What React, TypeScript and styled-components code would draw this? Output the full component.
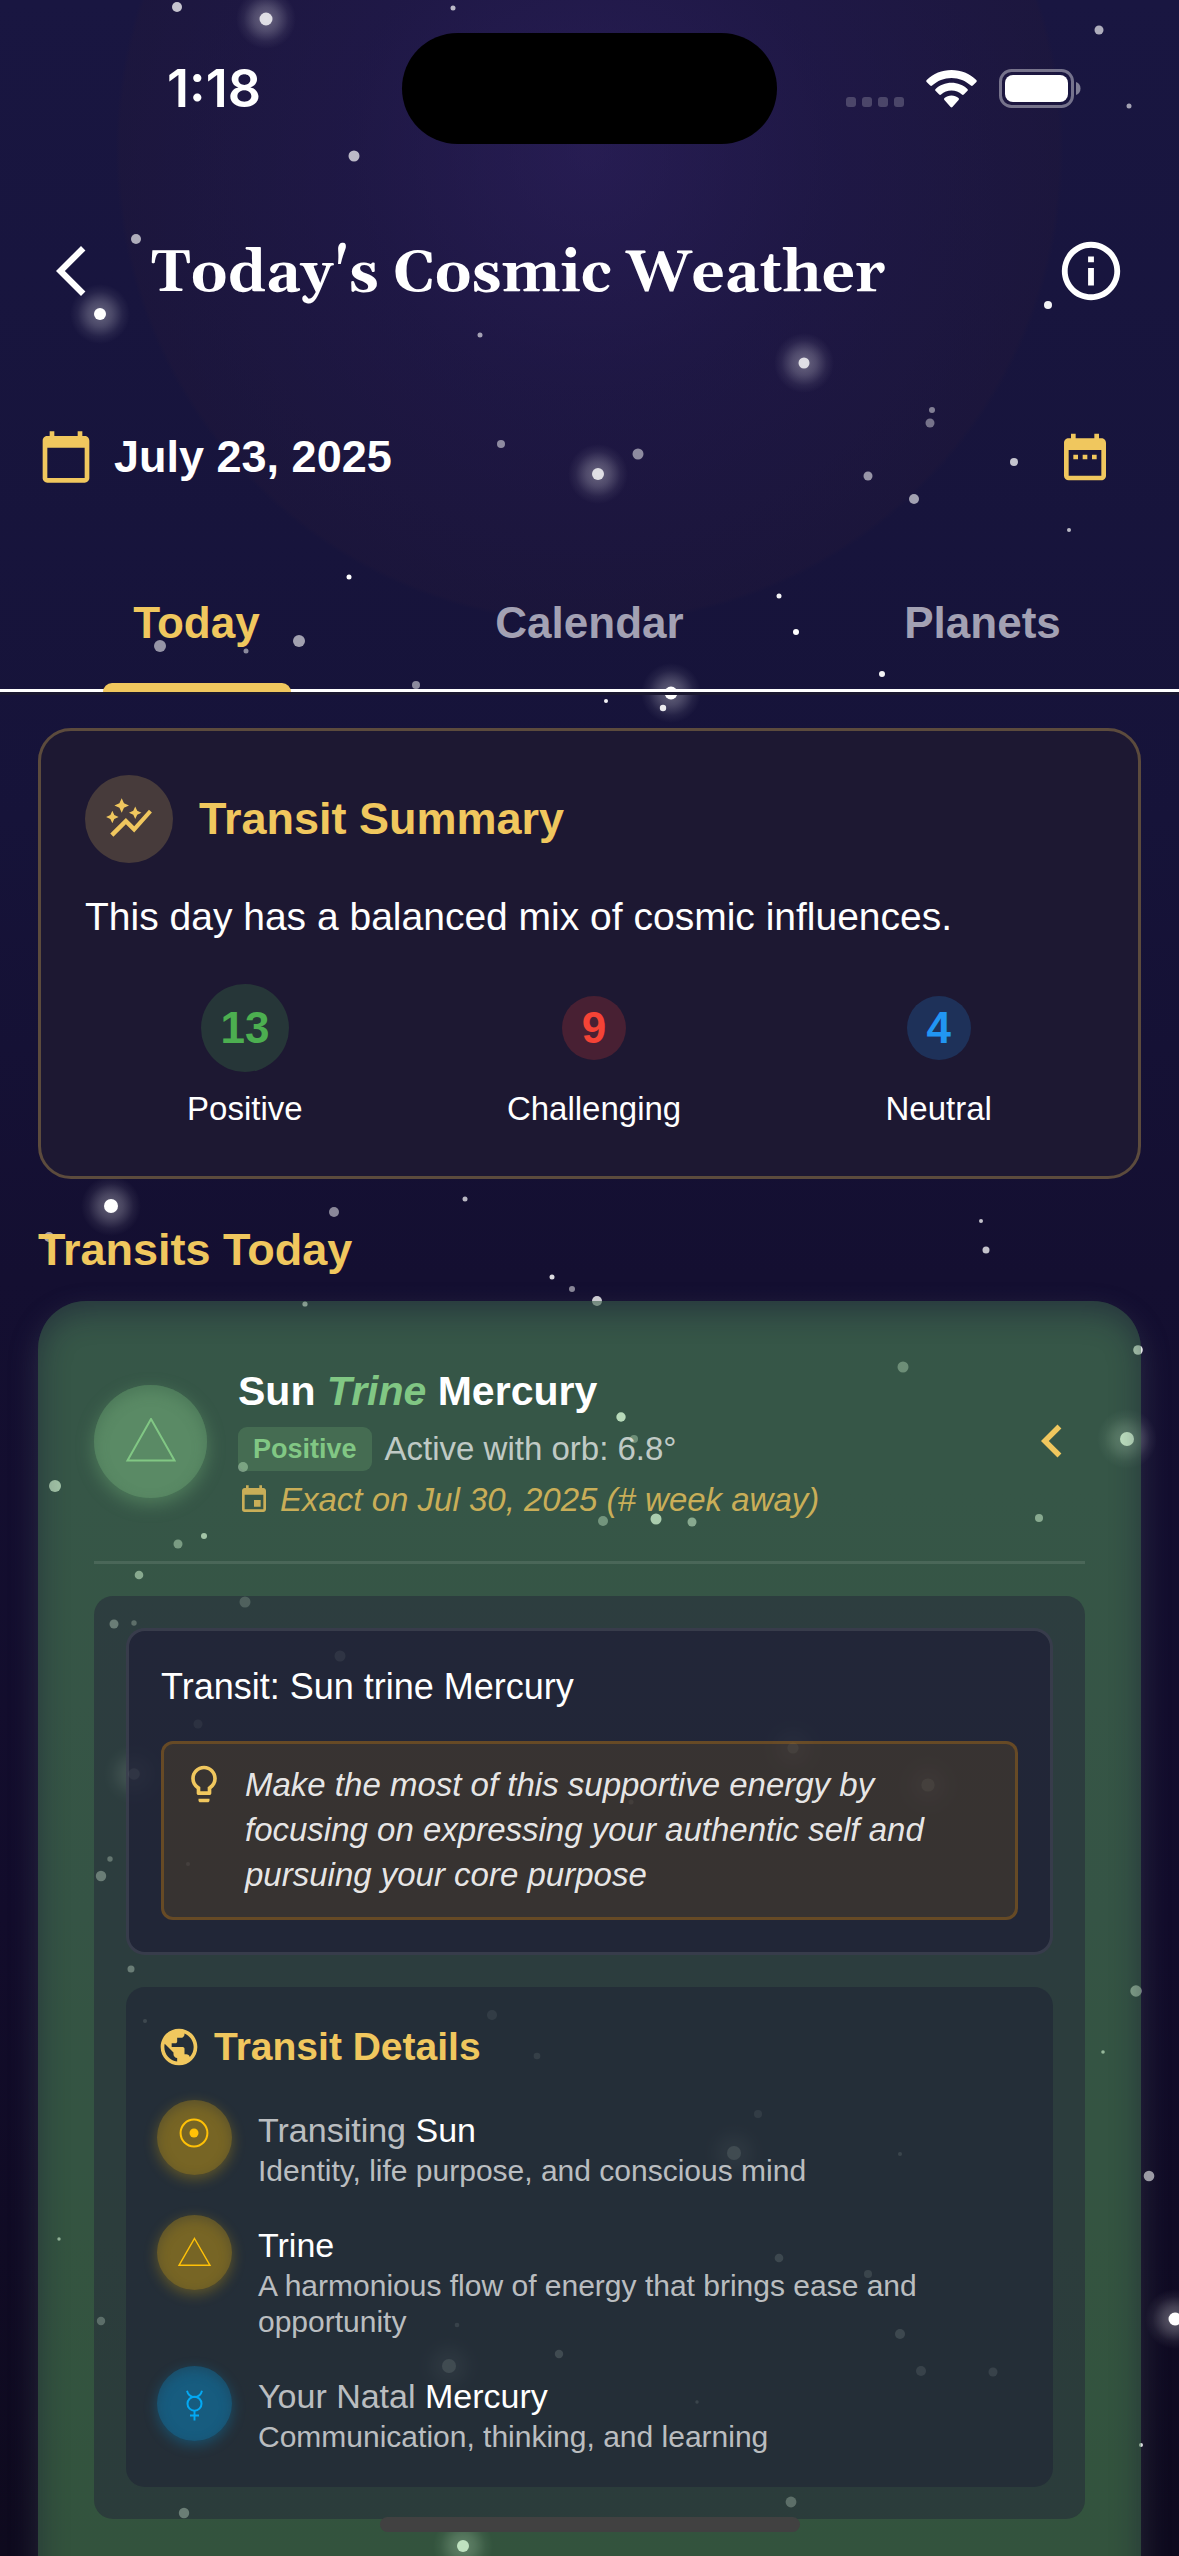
import React, { useState } from "react";
import styled, { createGlobalStyle, css } from "styled-components";
import {
  MdArrowBackIosNew,
  MdAutoGraph,
  MdCalendarToday,
  MdChevronLeft,
  MdDateRange,
  MdEvent,
  MdInfoOutline,
  MdLightbulbOutline,
  MdPublic,
} from "react-icons/md";

const color = {
  gold: "#f0c75e",
  white: "#ffffff",
  muted: "rgba(255, 255, 255, 0.7)",
  green: "#81c784",
  amber: "#ffc107",
  sky: "#03a9f4",
};

const GlobalStyle = createGlobalStyle`
  *, *::before, *::after { box-sizing: border-box; }
  body {
    margin: 0;
    background: #0f0a20;
    color: ${color.white};
    font-family: "Liberation Sans", Arial, Helvetica, sans-serif;
  }
  h1, h2, h3, h4, p { margin: 0; font-weight: inherit; font-size: inherit; }
  button { border: 0; padding: 0; background: none; color: inherit; font: inherit; cursor: pointer; }
  svg { display: block; flex: none; }
`;

/* ---------- shell ---------- */

const Screen = styled.div`
  position: relative;
  display: flex;
  flex-direction: column;
  height: 100vh;
  overflow: hidden;
  background:
    radial-gradient(circle 474px at 50% 150px, rgba(58, 38, 108, 0.42), rgba(42, 28, 80, 0.36) 50%, rgba(34, 24, 58, 0.36) 99%, transparent),
    linear-gradient(180deg, #191641 0%, #161339 32%, #140f31 50%, #120c2b 75%, #0e0a1e 100%);
`;

const Sky = styled.svg`
  position: absolute;
  inset: 0;
  width: 100%;
  height: 100%;
  pointer-events: none;
`;

const HomeBar = styled.div`
  position: absolute;
  left: 50%;
  bottom: 24px;
  width: 420px;
  height: 15px;
  margin-left: -210px;
  border-radius: 8px;
  background: #414141;
`;

/* ---------- status bar ---------- */

const StatusBar = styled.div`
  position: relative;
  display: grid;
  grid-template-columns: 1fr 375px 1fr;
  align-items: center;
  flex: none;
  height: 177px;
`;

const Clock = styled.time`
  padding-left: 26px;
  text-align: center;
  font: 600 52px/60px Inter, "Liberation Sans", sans-serif;
`;

const Island = styled.div`
  height: 111px;
  border-radius: 56px;
  background: #000;
`;

const Signals = styled.div`
  display: flex;
  justify-content: flex-end;
  align-items: flex-end;
  gap: 22px;
  padding-right: 98px;
`;

/* ---------- header ---------- */

const Header = styled.header`
  position: relative;
  display: flex;
  align-items: center;
  flex: none;
  height: 188px;
  padding: 0 53px 0 41px;
`;

const Title = styled.h1`
  flex: 1;
  padding: 6px 0 0 50px;
  font: 700 58px/72px Georgia, Gelasio, "Liberation Serif", serif;
`;

const DateRow = styled.div`
  position: relative;
  display: flex;
  align-items: center;
  gap: 20px;
  flex: none;
  height: 184px;
  padding: 0 66px 0 38px;
  color: ${color.gold};
`;

const DateText = styled.p`
  flex: 1;
  color: ${color.white};
  font-weight: 700;
  font-size: 45px;
`;

const Tabs = styled.div`
  position: relative;
  display: flex;
  flex: none;
  border-bottom: 3px solid #fff;
  box-shadow: 0 3px 0 #1b1930;
`;

const Tab = styled.button<{ $active: boolean }>`
  position: relative;
  flex: 1;
  height: 140px;
  padding-top: 8px;
  font-weight: 700;
  font-size: 44px;
  color: ${(p) => (p.$active ? color.gold : "#a3a1b3")};
  ${(p) =>
    p.$active &&
    css`
      &::after {
        content: "";
        position: absolute;
        left: 50%;
        bottom: -3px;
        width: 188px;
        height: 9px;
        margin-left: -94px;
        border-radius: 9px 9px 0 0;
        background: ${color.gold};
      }
    `}
`;

const Content = styled.main`
  position: relative;
  flex: 1;
  min-height: 0;
  margin-top: 3px;
  padding: 33px 38px 60px;
  overflow-y: auto;
  scrollbar-width: none;
`;

/* ---------- summary card ---------- */

const SummaryCard = styled.section`
  padding: 44px;
  border: 3px solid #5c4b3d;
  border-radius: 33px;
  background: #1d1832;
`;

const SummaryHead = styled.div`
  display: flex;
  align-items: center;
  gap: 26px;
`;

const Heading = styled.h2`
  color: ${color.gold};
  font-weight: 700;
  font-size: 45px;
  line-height: 52px;
`;

const SummaryIcon = styled.div`
  display: grid;
  place-items: center;
  width: 88px;
  height: 88px;
  border-radius: 50%;
  background: rgba(240, 199, 94, 0.2);
  color: ${color.gold};
`;

const SummaryText = styled.p`
  margin-top: 27px;
  font-size: 39px;
  line-height: 54px;
`;

const Stats = styled.div`
  display: flex;
  justify-content: space-around;
  margin-top: 40px;
`;

const Stat = styled.div`
  display: grid;
  grid-template-rows: 88px 46px;
  row-gap: 14px;
  place-items: center;
`;

const StatCount = styled.strong<{ $tone: string; $size: number }>`
  display: grid;
  place-items: center;
  width: ${(p) => p.$size}px;
  height: ${(p) => p.$size}px;
  border-radius: 50%;
  background: rgba(${(p) => p.$tone}, 0.2);
  color: rgb(${(p) => p.$tone});
  font-size: 44px;
`;

const StatLabel = styled.span`
  font-size: 33px;
`;

const ListHeading = styled(Heading)`
  margin: 45px 0 25px;
`;

/* ---------- transit card ---------- */

const TransitCard = styled.article`
  padding: 60px 56px 120px;
  border-radius: 48px;
  background: rgba(102, 187, 106, 0.42);
  box-shadow:
    0 12px 30px rgba(110, 130, 130, 0.25),
    inset 0 10px 30px rgba(20, 16, 48, 0.45);
`;

const TransitHead = styled.div`
  display: flex;
  align-items: center;
  padding-bottom: 40px;
  border-bottom: 3px solid rgba(255, 255, 255, 0.1);
`;

const AspectBadge = styled.div`
  display: grid;
  place-items: center;
  width: 113px;
  height: 113px;
  border-radius: 50%;
  background: #5a8a65;
  box-shadow:
    0 6px 18px rgba(129, 199, 132, 0.35),
    inset 0 6px 14px rgba(60, 100, 76, 0.45);
`;

const TransitInfo = styled.div`
  flex: 1;
  display: flex;
  flex-direction: column;
  gap: 8px;
  padding-left: 31px;
`;

const TransitTitle = styled.h3`
  padding-top: 2px;
  font-weight: 700;
  font-size: 41px;
  line-height: 56px;
  em { color: ${color.green}; }
`;

const OrbRow = styled.div`
  display: flex;
  align-items: center;
  gap: 13px;
  height: 44px;
  color: rgba(255, 255, 255, 0.7);
  font-size: 33px;
`;

const Tag = styled.span`
  padding: 0 15px;
  border-radius: 9px;
  background: rgba(129, 199, 132, 0.2);
  color: ${color.green};
  font-weight: 700;
  font-size: 27px;
  line-height: 44px;
`;

const ExactRow = styled.p`
  display: flex;
  align-items: center;
  gap: 10px;
  color: #c9ae58;
  font-style: italic;
  font-size: 33px;
  line-height: 42px;
`;

const ExpandButton = styled.button`
  color: ${color.gold};
`;

const Panel = styled.div`
  display: flex;
  flex-direction: column;
  gap: 32px;
  margin-top: 32px;
  padding: 32px;
  border-radius: 19px;
  background: rgba(35, 38, 56, 0.5);
`;

const Reading = styled.section`
  padding: 32px;
  border: 3px solid rgba(255, 255, 255, 0.1);
  border-radius: 19px;
  background: rgba(31, 32, 54, 0.78);
`;

const ReadingTitle = styled.p`
  font-size: 36px;
  line-height: 48px;
`;

const Tip = styled.div`
  display: flex;
  align-items: flex-start;
  gap: 19px;
  margin-top: 30px;
  padding: 18px 18px 20px;
  border: 3px solid rgba(255, 152, 0, 0.24);
  border-radius: 12px;
  background: rgba(255, 165, 0, 0.1);
  color: ${color.gold};
`;

const TipText = styled.p`
  color: rgba(255, 255, 255, 0.9);
  font-style: italic;
  font-size: 33px;
  line-height: 45px;
`;

const Details = styled.section`
  padding: 34px 31px 32px;
  border-radius: 19px;
  background: rgba(32, 36, 54, 0.6);
`;

const DetailsTitle = styled.h4`
  display: flex;
  align-items: center;
  gap: 13px;
  color: ${color.gold};
  font-weight: 700;
  font-size: 39px;
  line-height: 52px;
`;

const DetailList = styled.div`
  display: flex;
  flex-direction: column;
  gap: 26px;
  margin-top: 27px;
`;

const DetailRow = styled.div`
  display: flex;
  align-items: flex-start;
  gap: 26px;
`;

const Orb = styled.div<{ $tone: string }>`
  flex: none;
  width: 75px;
  height: 75px;
  border-radius: 50%;
  background: rgba(${(p) => p.$tone}, 0.38);
  box-shadow:
    0 4px 14px rgba(${(p) => p.$tone}, 0.28),
    inset 0 4px 12px rgba(36, 45, 56, 0.35);
`;

const DetailText = styled.div`
  display: grid;
  row-gap: 3px;
  padding-top: 10px;
  color: ${color.muted};
`;

const DetailName = styled.p`
  font-size: 34px;
  line-height: 40px;
  b { color: ${color.white}; font-weight: 400; }
`;

const DetailNote = styled.p`
  font-size: 30px;
  line-height: 36px;
`;

/* ---------- drawings ---------- */

// x, y, radius, opacity
const STARS: [number, number, number, number][] = [
  [177, 7, 5, 0.75], [453, 8, 2.5, 0.7], [1099, 30, 4.5, 0.65], [1129, 106, 2.5, 0.6],
  [354, 156, 5.5, 0.7], [136, 239, 5, 0.65], [480, 335, 2.5, 0.6], [1048, 305, 4, 0.95],
  [932, 410, 3, 0.45], [930, 423, 4.5, 0.4], [501, 444, 4, 0.5], [638, 454, 5.5, 0.5],
  [1014, 462, 4, 0.75], [868, 476, 4.5, 0.55], [914, 499, 5, 0.6], [1069, 530, 2, 0.7],
  [349, 577, 2.5, 1], [779, 596, 2.5, 0.95], [796, 632, 3, 1], [299, 641, 6, 0.6],
  [160, 646, 6, 0.55], [246, 651, 2.5, 0.5], [882, 674, 3, 0.95], [416, 685, 4, 0.5],
  [606, 701, 2, 0.95], [663, 708, 3.2, 0.9], [334, 1212, 5, 0.5], [465, 1199, 2.5, 0.7],
  [49, 1237, 5, 0.6], [552, 1277, 2.5, 0.85], [572, 1289, 3, 0.5], [597, 1301, 5, 0.8],
  [305, 1304, 2.6, 0.95], [243, 1467, 5, 0.5], [55, 1486, 6, 0.8], [178, 1544, 4.5, 0.5],
  [204, 1536, 3, 0.8], [139, 1575, 4.3, 0.6], [981, 1221, 2, 0.75], [986, 1250, 3.5, 0.75],
  [1138, 1350, 4.8, 0.95], [903, 1367, 5.5, 0.4], [621, 1417, 4.7, 0.95], [634, 1439, 4, 0.4],
  [603, 1521, 5, 0.45], [656, 1519, 5.5, 0.85], [692, 1522, 4.5, 0.6], [1039, 1518, 4, 0.6],
  [245, 1602, 5.5, 0.5], [114, 1624, 4.5, 0.9], [134, 1623, 2.7, 0.7], [340, 1656, 5.5, 0.9],
  [198, 1724, 4.5, 0.7], [188, 1864, 2, 0.9], [110, 1859, 2.7, 0.8], [101, 1876, 5.2, 0.9],
  [131, 1969, 3.5, 0.9], [631, 1802, 2.5, 0.8], [145, 2021, 2, 0.9], [492, 2015, 5, 0.5],
  [537, 2056, 3.3, 0.6], [59, 2239, 1.7, 0.7], [101, 2321, 4.2, 0.7], [457, 2325, 2.3, 0.7],
  [559, 2354, 4.2, 1], [184, 2513, 5.2, 0.9], [1136, 1991, 5.7, 0.6], [1103, 2052, 1.8, 0.7],
  [758, 2114, 4, 0.5], [900, 2154, 2, 0.8], [1149, 2176, 5.3, 0.6], [779, 2258, 4.3, 0.9],
  [868, 2274, 4, 0.8], [900, 2334, 5, 0.9], [921, 2371, 5, 0.7], [993, 2372, 4.5, 0.7],
  [697, 2402, 1.7, 0.8], [1141, 2445, 2, 0.9], [791, 2502, 5.4, 0.7],
];

const GLOWING: [number, number, number, number][] = [
  [266, 19, 6.5, 0.8], [100, 314, 6, 1], [804, 363, 5.5, 0.8], [598, 474, 6, 0.8],
  [671, 693, 6.5, 1], [111, 1206, 7, 1], [1127, 1439, 7, 1], [134, 1774, 5.8, 0.9],
  [793, 1748, 5.6, 0.9], [928, 1785, 6.6, 0.95], [449, 2366, 7, 1], [463, 2546, 6, 1],
  [734, 2153, 7, 1], [1175, 2319, 6.5, 1],
];

const StarField = () => (
  <Sky viewBox="0 0 1179 2556" preserveAspectRatio="xMidYMin slice" aria-hidden="true">
    <defs>
      <radialGradient id="glow">
        <stop offset="0" stopColor="#fff" stopOpacity="0.34" />
        <stop offset="0.4" stopColor="#fff" stopOpacity="0.22" />
        <stop offset="0.75" stopColor="#fff" stopOpacity="0.06" />
        <stop offset="1" stopColor="#fff" stopOpacity="0" />
      </radialGradient>
    </defs>
    {GLOWING.map(([x, y, r, o]) => (
      <g key={`${x}-${y}`}>
        <circle cx={x} cy={y} r={30} fill="url(#glow)" />
        <circle cx={x} cy={y} r={r} fill="#fff" opacity={o} />
      </g>
    ))}
    {STARS.map(([x, y, r, o]) => (
      <circle key={`${x}-${y}`} cx={x} cy={y} r={r} fill="#fff" opacity={o} />
    ))}
  </Sky>
);

const CellDots = () => (
  <svg width="58" height="12" viewBox="0 0 58 12" fill="#fff" opacity="0.2" aria-hidden="true">
    {[0, 16, 32, 48].map((x) => (
      <rect key={x} x={x} y="0" width="10" height="10" rx="3" />
    ))}
  </svg>
);

const Wifi = () => (
  <svg width="51" height="39" viewBox="0 0 51 39" fill="#fff" aria-hidden="true">
    <path d="M25.5 0C35 0 43.8 3.7 50.3 9.9c.6.6.6 1.4.1 2l-3.6 3.7c-.5.5-1.4.5-1.9 0C39.7 10.7 32.9 7.9 25.5 7.9S11.3 10.7 6.1 15.6c-.5.5-1.4.5-1.9 0L.6 11.9c-.5-.6-.5-1.4.1-2C7.2 3.7 16 0 25.5 0z" />
    <path d="M25.5 12.7c6.1 0 11.7 2.3 15.9 6.2.6.5.6 1.4.1 1.9l-3.7 3.7c-.5.5-1.3.5-1.9.1-2.8-2.5-6.4-4-10.4-4s-7.6 1.500-10.400 4c-.6.4-1.4.4-1.9-.1l-3.700-3.700c-.5-.5-.5-1.400.1-1.900 4.200-3.900 9.800-6.200 15.900-6.200z" />
    <path d="M25.5 25.4c2.7 0 5.1 1 7 2.6.6.5.6 1.3.1 1.9l-6.2 7.1c-.5.6-1.3.6-1.8 0l-6.200-7.100c-.5-.6-.5-1.400.1-1.900 1.900-1.600 4.300-2.600 7-2.600z" />
  </svg>
);

const Battery = () => (
  <svg width="82" height="40" viewBox="0 0 82 40" aria-hidden="true">
    <rect x="1.5" y="1.5" width="72" height="36" rx="11" fill="none" stroke="#fff" strokeOpacity="0.4" strokeWidth="3" />
    <rect x="6" y="6" width="63" height="27" rx="8" fill="#fff" />
    <path d="M77 13c3 1 4.500 3.500 4.500 6.500S80 25 77 26z" fill="#fff" opacity="0.45" />
  </svg>
);

const TrineGlyph = () => (
  <svg width="52" height="46" viewBox="0 0 52 46" fill="none" stroke={color.green} strokeWidth="2" aria-hidden="true">
    <path d="M26 1L49.500 42.500h-47z" />
  </svg>
);

const glyphs = {
  sun: (
    <>
      <circle cx="37" cy="33" r="13.4" strokeWidth="2" />
      <circle cx="37" cy="33" r="4.5" fill="currentColor" stroke="none" />
    </>
  ),
  trine: <path d="M37.5 23.500L53 50.300H22z" strokeWidth="1.400" />,
  mercury: (
    <>
      <circle cx="37.5" cy="37.7" r="7" strokeWidth="2" />
      <path d="M30 24.700c1 4 4 6.200 7.500 6.200s6.500-2.200 7.500-6.200M37.500 44.700v9.800M33 49.500h9" strokeWidth="1.900" />
    </>
  ),
};

type GlyphName = keyof typeof glyphs;

const OrbGlyph = ({ name, tint }: { name: GlyphName; tint: string }) => (
  <svg width="75" height="75" viewBox="0 0 75 75" fill="none" stroke="currentColor" color={tint} aria-hidden="true">
    {glyphs[name]}
  </svg>
);

/* ---------- data ---------- */

const STATS = [
  { label: "Positive", count: 13, tone: "76, 175, 80", size: 88 },
  { label: "Challenging", count: 9, tone: "244, 67, 54", size: 64 },
  { label: "Neutral", count: 4, tone: "33, 150, 243", size: 64 },
];

const DETAILS: { glyph: GlyphName; tone: string; tint: string; prefix: string; name: string; note: string }[] = [
  { glyph: "sun", tone: "255, 193, 7", tint: color.amber, prefix: "Transiting ", name: "Sun", note: "Identity, life purpose, and conscious mind" },
  { glyph: "trine", tone: "255, 193, 7", tint: color.amber, prefix: "", name: "Trine", note: "A harmonious flow of energy that brings ease and opportunity" },
  { glyph: "mercury", tone: "3, 169, 244", tint: color.sky, prefix: "Your Natal ", name: "Mercury", note: "Communication, thinking, and learning" },
];

const TABS = ["Today", "Calendar", "Planets"];

export default function App() {
  const [tab, setTab] = useState("Today");

  return (
    <>
      <GlobalStyle />
      <Screen>
        <StarField />
        <StatusBar>
          <Clock>1:18</Clock>
          <Island />
          <Signals>
            <CellDots />
            <Wifi />
            <Battery />
          </Signals>
        </StatusBar>

        <Header>
          <button type="button" aria-label="Back">
            <MdArrowBackIosNew size={60} />
          </button>
          <Title>Today's Cosmic Weather</Title>
          <button type="button" aria-label="About">
            <MdInfoOutline size={70} />
          </button>
        </Header>

        <DateRow>
          <MdCalendarToday size={56} />
          <DateText>July 23, 2025</DateText>
          <button type="button" aria-label="Pick a date">
            <MdDateRange size={56} />
          </button>
        </DateRow>

        <Tabs role="tablist">
          {TABS.map((name) => (
            <Tab
              key={name}
              type="button"
              role="tab"
              aria-selected={tab === name}
              $active={tab === name}
              onClick={() => setTab(name)}
            >
              {name}
            </Tab>
          ))}
        </Tabs>

        <Content>
          <SummaryCard>
            <SummaryHead>
              <SummaryIcon>
                <MdAutoGraph size={50} />
              </SummaryIcon>
              <Heading>Transit Summary</Heading>
            </SummaryHead>
            <SummaryText>This day has a balanced mix of cosmic influences.</SummaryText>
            <Stats>
              {STATS.map((s) => (
                <Stat key={s.label}>
                  <StatCount $tone={s.tone} $size={s.size}>
                    {s.count}
                  </StatCount>
                  <StatLabel>{s.label}</StatLabel>
                </Stat>
              ))}
            </Stats>
          </SummaryCard>

          <ListHeading>Transits Today</ListHeading>

          <TransitCard>
            <TransitHead>
              <AspectBadge>
                <TrineGlyph />
              </AspectBadge>
              <TransitInfo>
                <TransitTitle>
                  Sun <em>Trine</em> Mercury
                </TransitTitle>
                <OrbRow>
                  <Tag>Positive</Tag>
                  <span>Active with orb: 6.8°</span>
                </OrbRow>
                <ExactRow>
                  <MdEvent size={32} />
                  Exact on Jul 30, 2025 (# week away)
                </ExactRow>
              </TransitInfo>
              <ExpandButton type="button" aria-label="Toggle details" aria-expanded>
                <MdChevronLeft size={66} />
              </ExpandButton>
            </TransitHead>

            <Panel>
              <Reading>
                <ReadingTitle>Transit: Sun trine Mercury</ReadingTitle>
                <Tip>
                  <MdLightbulbOutline size={44} />
                  <TipText>
                    Make the most of this supportive energy by focusing on expressing your authentic self and pursuing
                    your core purpose
                  </TipText>
                </Tip>
              </Reading>

              <Details>
                <DetailsTitle>
                  <MdPublic size={44} />
                  Transit Details
                </DetailsTitle>
                <DetailList>
                  {DETAILS.map((d) => (
                    <DetailRow key={d.name}>
                      <Orb $tone={d.tone}>
                        <OrbGlyph name={d.glyph} tint={d.tint} />
                      </Orb>
                      <DetailText>
                        <DetailName>
                          {d.prefix}
                          <b>{d.name}</b>
                        </DetailName>
                        <DetailNote>{d.note}</DetailNote>
                      </DetailText>
                    </DetailRow>
                  ))}
                </DetailList>
              </Details>
            </Panel>
          </TransitCard>
        </Content>
        <HomeBar />
      </Screen>
    </>
  );
}
